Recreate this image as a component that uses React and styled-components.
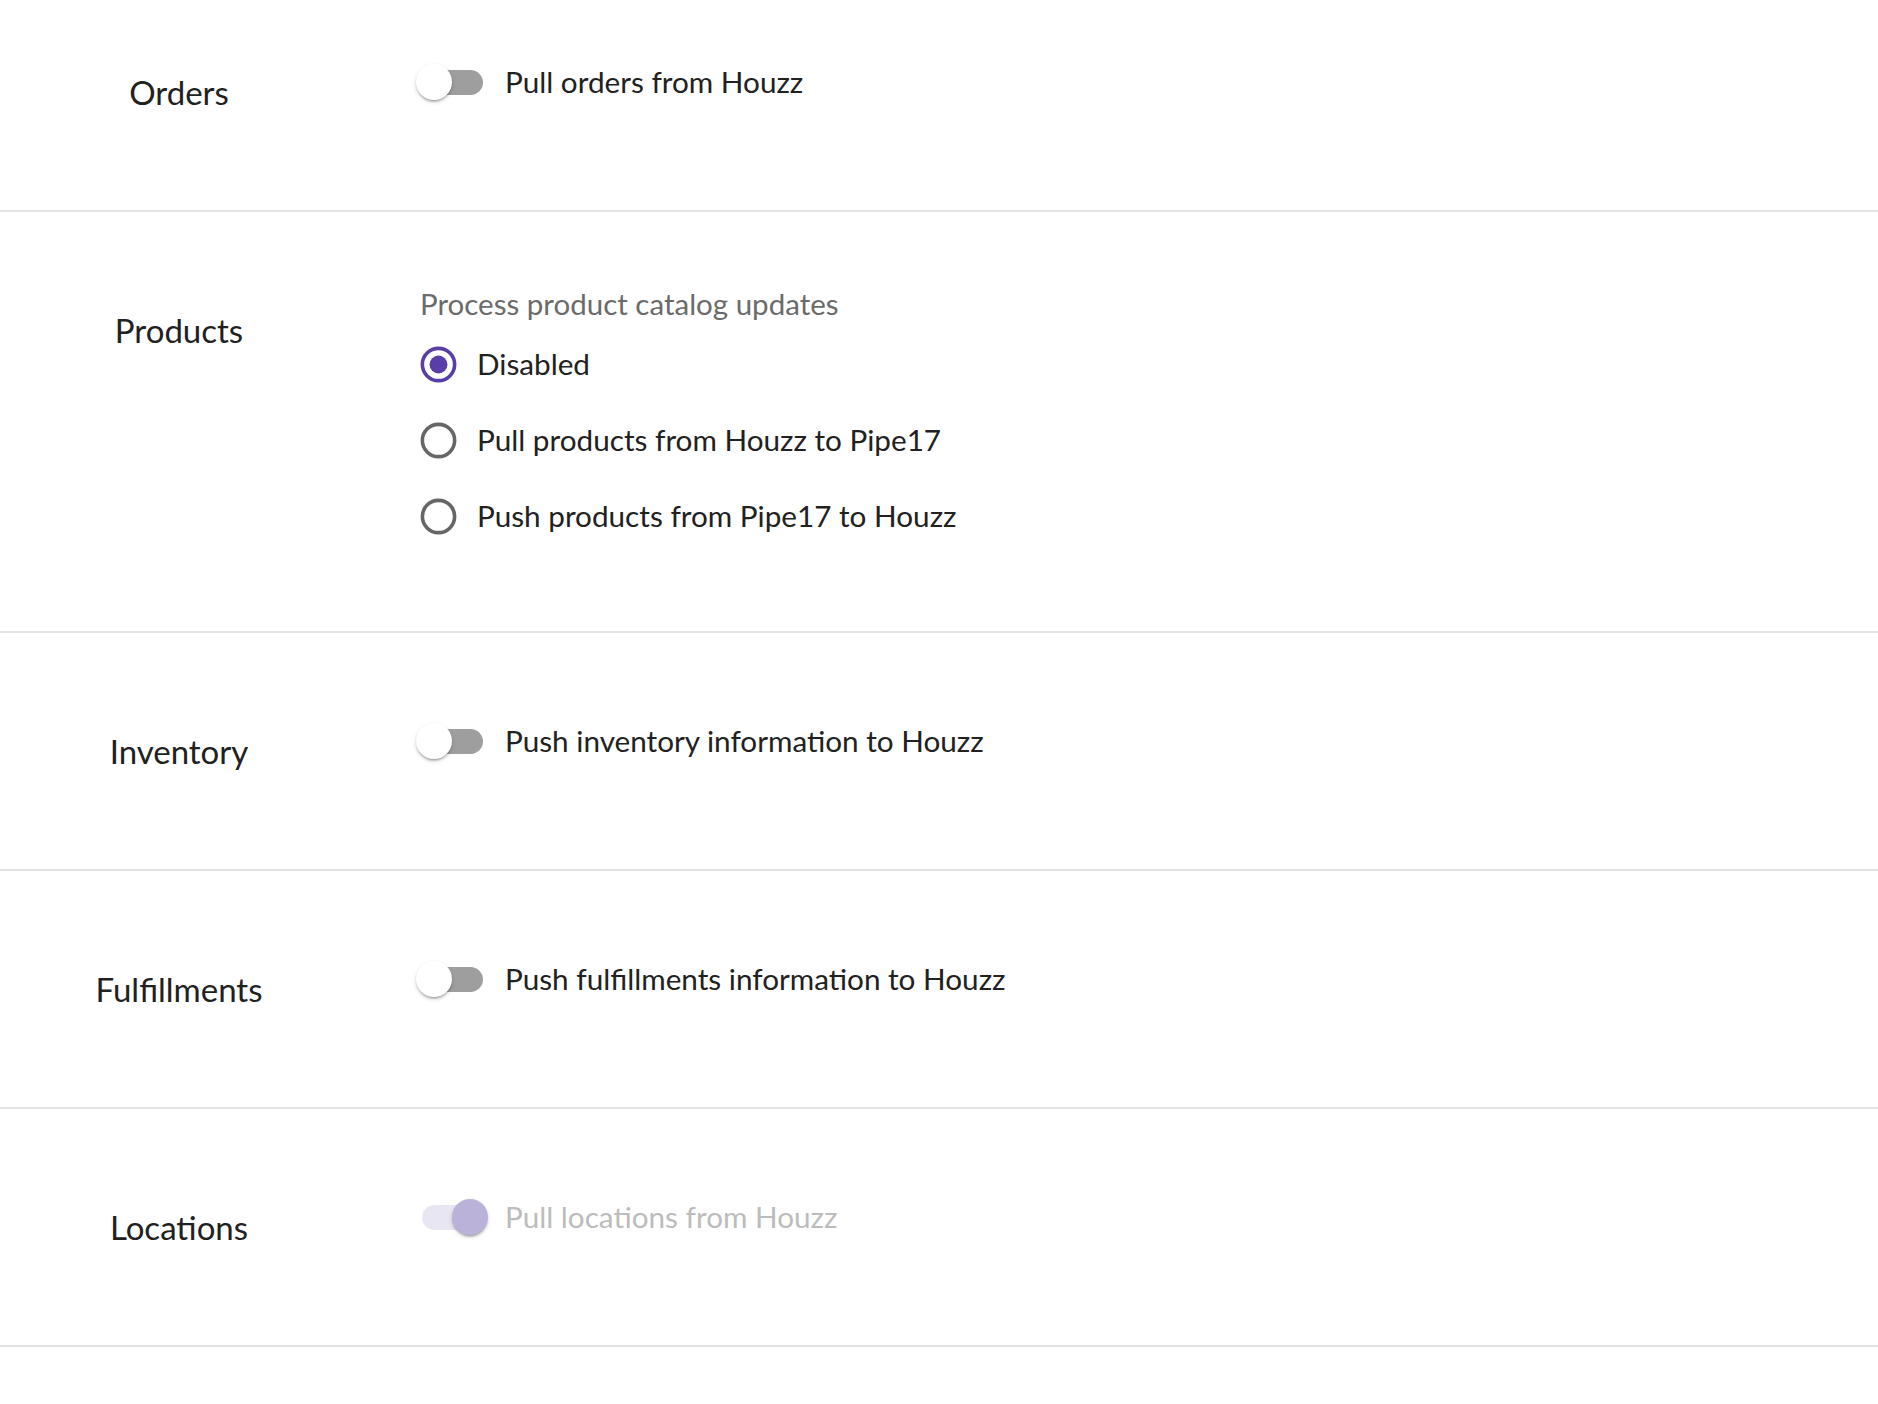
import React from "react";
import styled, { createGlobalStyle } from "styled-components";

const GlobalStyle = createGlobalStyle`
    html, body {
        margin: 0;
        padding: 0;
        background: #ffffff;
    }
    body {
        font-family: Lato, "Open Sans", sans-serif;
        color: #212121;
    }
`;

const Page = styled.div`
    display: flex;
    flex-direction: column;
`;

const Section = styled.div`
    display: grid;
    grid-template-columns: 358px 1fr;
    column-gap: 62px;
    align-items: start;
    padding: ${(p) => (p.$first ? 48 : 74)}px 0 ${(p) => p.$bottom || 94}px;
    border-bottom: 2px solid #e3e3e3;
`;

const SectionLabel = styled.div`
    padding-top: 20px;
    text-align: center;
    font-size: 33px;
    line-height: 48px;
    color: #212121;
`;

const Content = styled.div`
    display: flex;
    flex-direction: column;
    align-items: flex-start;
`;

const ControlLabel = styled.label`
    display: inline-flex;
    align-items: center;
    margin-left: -20px;
    gap: 1px;
    font-size: 29.7px;
    line-height: 1.5;
    color: ${(p) => (p.$disabled ? "#bcbcbc" : "#212121")};
    cursor: ${(p) => (p.$disabled ? "default" : "pointer")};
`;

const SwitchRoot = styled.span`
    position: relative;
    flex: none;
    width: 104px;
    height: 68px;
`;

const Track = styled.span`
    position: absolute;
    left: 22px;
    top: 22px;
    width: 61px;
    height: 25px;
    border-radius: 13px;
    background: ${(p) => (p.$on ? (p.$disabled ? "#e9e6f4" : "#b5a6dc") : "#9e9e9e")};
`;

const Thumb = styled.span`
    position: absolute;
    top: 16px;
    left: ${(p) => (p.$on ? 52 : 16)}px;
    width: 36px;
    height: 36px;
    border-radius: 50%;
    background: ${(p) => (p.$on ? (p.$disabled ? "#bbb2d9" : "#5a3ea8") : "#ffffff")};
    box-shadow: 0 3px 2px -2px rgba(0, 0, 0, 0.2), 0 2px 2px 0 rgba(0, 0, 0, 0.14),
        0 2px 5px 0 rgba(0, 0, 0, 0.12);
`;

const Caption = styled.div`
    font-size: 29.5px;
    line-height: 36px;
    color: #6b6b6b;
`;

const RadioGroup = styled.div`
    display: flex;
    flex-direction: column;
    margin-top: 4px;
`;

const RadioRoot = styled.span`
    display: flex;
    align-items: center;
    justify-content: center;
    flex: none;
    width: 76px;
    height: 76px;
    color: ${(p) => (p.$checked ? "#5a3ea8" : "#666666")};
`;

const Switch = ({ on, disabled }) => (
    <SwitchRoot>
        <Track $on={on} $disabled={disabled} />
        <Thumb $on={on} $disabled={disabled} />
    </SwitchRoot>
);

const Radio = ({ checked }) => (
    <RadioRoot $checked={checked}>
        <svg width="43" height="43" viewBox="0 0 24 24">
            <circle cx="12" cy="12" r="9" fill="none" stroke="currentColor" strokeWidth="2" />
            {checked && <circle cx="12" cy="12" r="5" fill="currentColor" />}
        </svg>
    </RadioRoot>
);

const ToggleRow = ({ label, on, disabled, first }) => (
    <Section $first={first}>
        <SectionLabel>{label.title}</SectionLabel>
        <Content>
            <ControlLabel $disabled={disabled}>
                <Switch on={on} disabled={disabled} />
                {label.text}
            </ControlLabel>
        </Content>
    </Section>
);

const productOptions = [
    "Disabled",
    "Pull products from Houzz to Pipe17",
    "Push products from Pipe17 to Houzz",
];

export default function App() {
    return (
        <Page>
            <GlobalStyle />
            <ToggleRow first label={{ title: "Orders", text: "Pull orders from Houzz" }} />

            <Section $bottom={77}>
                <SectionLabel>Products</SectionLabel>
                <Content>
                    <Caption>Process product catalog updates</Caption>
                    <RadioGroup>
                        {productOptions.map((opt, i) => (
                            <ControlLabel key={opt}>
                                <Radio checked={i === 0} />
                                {opt}
                            </ControlLabel>
                        ))}
                    </RadioGroup>
                </Content>
            </Section>

            <ToggleRow label={{ title: "Inventory", text: "Push inventory information to Houzz" }} />
            <ToggleRow label={{ title: "Fulfillments", text: "Push fulfillments information to Houzz" }} />
            <ToggleRow on disabled label={{ title: "Locations", text: "Pull locations from Houzz" }} />
        </Page>
    );
}
